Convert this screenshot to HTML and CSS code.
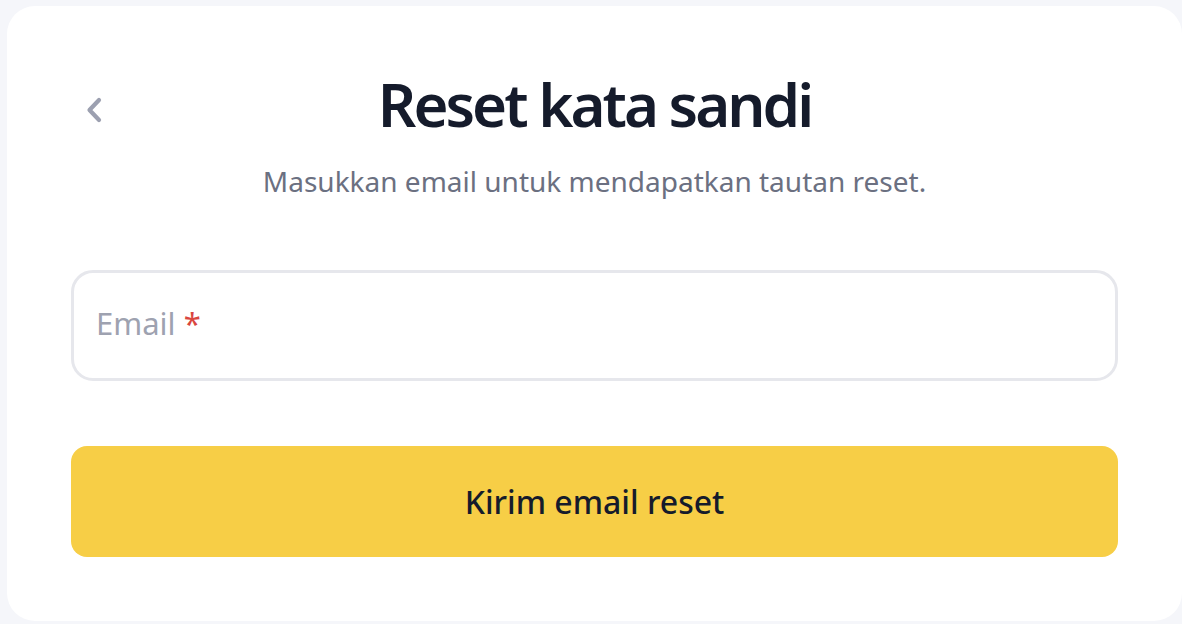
FILE: index.html
```html
<!DOCTYPE html>
<html lang="id">
<head>
<meta charset="utf-8">
<title>Reset kata sandi</title>
<link rel="stylesheet" href="styles.css">
</head>
<body>
<main class="card">
  <header class="head">
    <button class="back" type="button" aria-label="Kembali">
      <svg width="20" height="26" viewBox="0 0 20 26" fill="none" stroke="#9ca0b0" stroke-width="4.2" stroke-linecap="round" stroke-linejoin="round"><path d="M14 3 L4.5 13 L14 23"/></svg>
    </button>
    <h1 class="title">Reset kata sandi</h1>
  </header>
  <p class="subtitle">Masukkan email untuk mendapatkan tautan reset.</p>
  <form class="form">
    <label class="field">
      <span class="placeholder">Email <span class="req">*</span></span>
    </label>
    <button class="submit" type="button">Kirim email reset</button>
  </form>
</main>
</body>
</html>
```
FILE: styles.css
```css
html, body {
  margin: 0;
  padding: 0;
}
body {
  background: #f5f6fa;
  font-family: "Noto Sans", "Open Sans", sans-serif;
  padding: 6px 0 0 7px;
  height: 624px;
  box-sizing: border-box;
  overflow: hidden;
}
.card {
  background: #ffffff;
  border-radius: 28px;
  width: 1175px;
  height: 615px;
  box-sizing: border-box;
  padding: 62px 64px 0 64px;
}
.head {
  position: relative;
  display: flex;
  justify-content: center;
  align-items: center;
}
.back {
  position: absolute;
  left: 14px;
  top: 29px;
  background: none;
  border: 0;
  padding: 0;
  width: 20px;
  height: 26px;
  cursor: pointer;
}
.back svg { display: block; }
.title {
  margin: 0;
  font-size: 60px;
  font-weight: 650;
  color: #151b2b;
  line-height: 72px;
  letter-spacing: -3px;
}
.subtitle {
  margin: 23px 0 0 0;
  text-align: center;
  font-size: 28px;
  color: #6b7081;
  line-height: 36px;
}
.form {
  margin-top: 71px;
  display: flex;
  flex-direction: column;
  gap: 65px;
}
.field {
  display: flex;
  align-items: center;
  height: 111px;
  box-sizing: border-box;
  border: 3px solid #e6e7ec;
  border-radius: 22px;
  padding: 0 22px;
}
.placeholder {
  font-size: 31px;
  color: #9ea2b0;
  margin-top: -5px;
}
.req {
  color: #d9463f;
}
.submit {
  height: 111px;
  border: 0;
  border-radius: 16px;
  background: #f7ce46;
  font-family: "Noto Sans", "Open Sans", sans-serif;
  font-size: 32px;
  font-weight: 500;
  color: #151b2b;
  cursor: pointer;
}
```
